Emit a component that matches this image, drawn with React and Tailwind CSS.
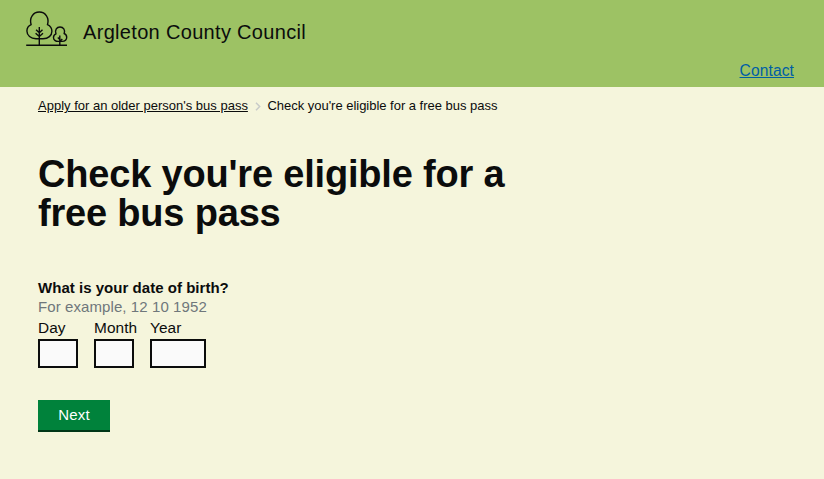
const FIELDS = [
  { label: "Day", box: "w-10", column: "w-10" },
  { label: "Month", box: "w-10", column: "w-10" },
  { label: "Year", box: "w-14", column: "w-14" },
];

function TreesLogo() {
  return (
    <svg width="42" height="36" viewBox="0 0 42 36" fill="none" stroke="#0b0c0c" strokeWidth="1.4" className="mt-0.5 block shrink-0">
      <path d="M0.2 34.3H41" />
      <path d="M13.3 34V16M13.3 21.8l-3.2-3.1M13.3 21.8l3.2-3.1M13.3 25.6l-3.7-3.3M13.3 25.6l3.7-3.3" />
      <path d="M10 27.7C4.8 27.6 0.9 24.5 0.9 20.1C0.9 17.2 2.7 14.8 5.1 13.7C3.1 6.8 7.1 1 13.3 1C19.5 1 23.5 6.8 21.5 13.7C24.2 15 25.9 17.4 25.9 20.3C25.9 24.7 22.2 27.7 17 27.7H10Z" />
      <path d="M33.8 34V24.5M33.8 28.6l-2-2M33.8 30.4l2.5-2.5" />
      <path d="M32.5 30.4C29.5 30.5 27.5 28.9 27.5 26.4C27.5 24.8 28.4 23.4 29.9 22.8C28.7 19 30.7 16 34 16C37.4 16 39.4 19 38.2 22.5C39.8 23.1 40.7 24.6 40.7 26.3C40.7 28.9 38.8 30.4 36 30.4H32.5Z" />
    </svg>
  );
}

export default function App() {
  return (
    <div className="min-h-screen bg-[#f5f5dc] font-['Liberation_Sans',Arial,sans-serif] text-[#0b0c0c]">
      <header className="flex h-[87px] flex-col justify-between bg-[#9dc264] pt-[9px] pr-[30px] pb-1.5 pl-[26px]">
        <div className="flex items-center gap-[15px]">
          <TreesLogo />
          <span className="pt-2 text-[20px] leading-7 tracking-[0.32px]">Argleton County Council</span>
        </div>
        <a href="#" className="self-end text-[15.6px] leading-5 tracking-[0.1px] text-[#005ea5] underline">
          Contact
        </a>
      </header>
      <main className="px-[38px]">
        <nav className="flex items-center pt-[9px] text-[13px] leading-5">
          <a href="#" className="underline">Apply for an older person's bus pass</a>
          <svg width="6" height="9" viewBox="0 0 6 9" fill="none" stroke="#c8cbc9" strokeWidth="1.5" className="mr-[6.5px] ml-[7px]">
            <path d="M1 .7L4.7 4.5L1 8.3" />
          </svg>
          <span className="tracking-[-0.02px]">Check you're eligible for a free bus pass</span>
        </nav>
        <h1 className="mt-[39px] w-[490px] text-[38px] leading-[39px] font-bold tracking-[-0.19px]">
          Check you're eligible for a free bus pass
        </h1>
        <form className="mt-[45px]">
          <p className="text-[15px] leading-[19px] font-bold tracking-[0.03px]">What is your date of birth?</p>
          <p className="text-[15px] leading-[19px] tracking-[0.09px] text-[#6f777b]">For example, 12 10 1952</p>
          <div className="mt-[2px] flex gap-4">
            {FIELDS.map((f) => (
              <label key={f.label} className={f.column}>
                <span className="mb-px block text-[15.4px] leading-5 tracking-[0.1px]">{f.label}</span>
                <input className={`${f.box} block h-[29px] border-2 border-[#0b0c0c] bg-[#fafafa] px-1 outline-none`} />
              </label>
            ))}
          </div>
          <button type="button" className="mt-8 block h-8 w-[72px] border-b-2 border-[#003618] bg-[#00823b] text-[15px] leading-[30px] tracking-[0.2px] text-white">
            Next
          </button>
        </form>
      </main>
    </div>
  );
}
